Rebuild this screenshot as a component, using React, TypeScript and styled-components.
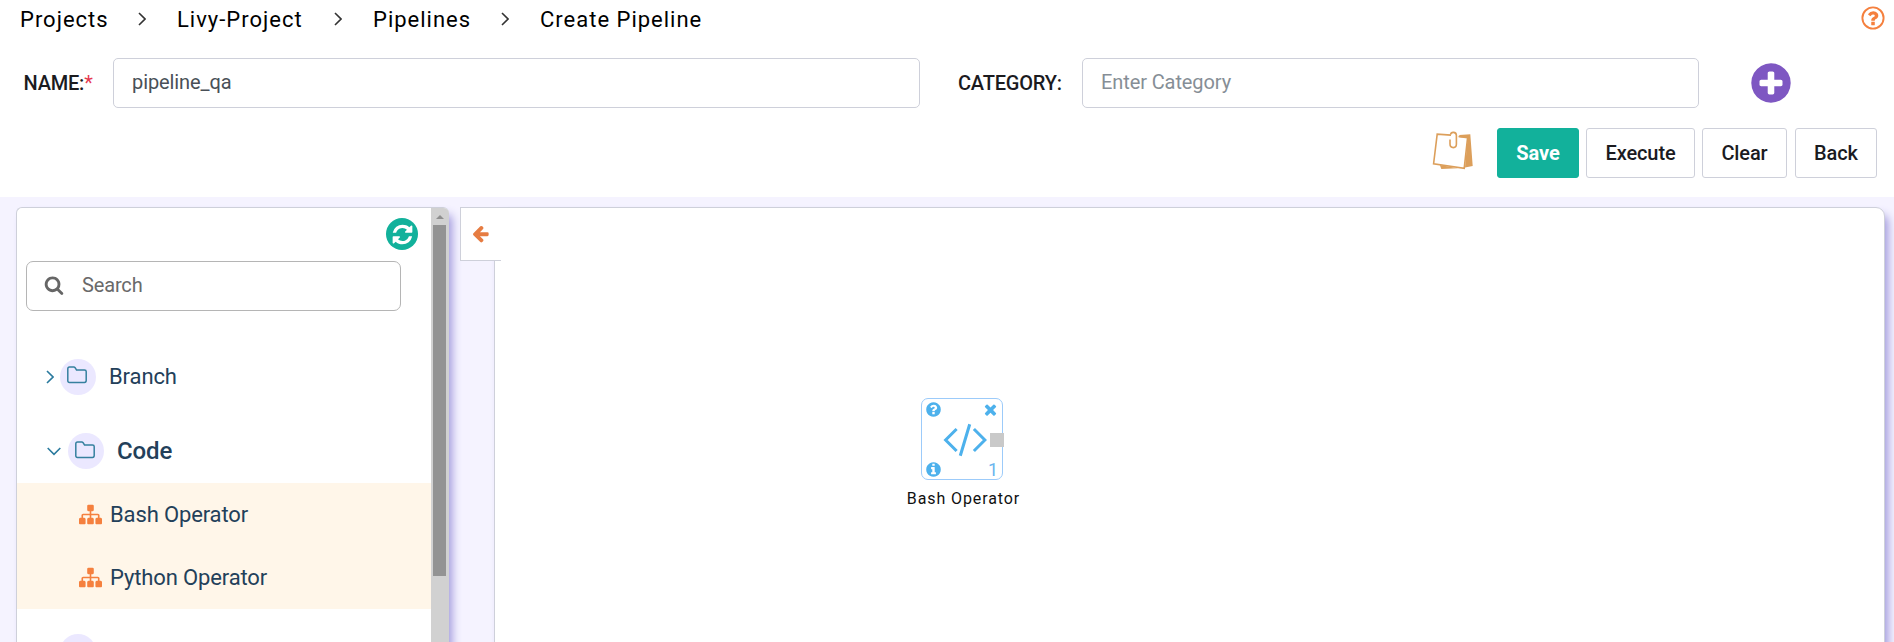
import React from "react";
import styled, { createGlobalStyle } from "styled-components";

const GlobalStyle = createGlobalStyle`
  * { box-sizing: border-box; }
  body {
    margin: 0;
    background: #f5f3ff;
    font-family: Roboto, "Liberation Sans", sans-serif;
    color: #212529;
    overflow: hidden;
  }
  button, input { font-family: inherit; }
`;

const disc =
  "M1664 896q0 209-103 385.5t-279.5 279.5-385.5 103-385.5-103-279.5-279.5-103-385.5 103-385.5 279.5-279.5 385.5-103 385.5 103 279.5 279.5 103 385.5z";
const question =
  "M1024 1376v-192q0-14-9-23t-23-9h-192q-14 0-23 9t-9 23v192q0 14 9 23t23 9h192q14 0 23-9t9-23zM1280 704q0-88-55.5-163t-138.5-116-170-41q-243 0-371 213-15 24 8 42l132 100q7 6 19 6 16 0 25-12 53-68 86-92 34-24 86-24 48 0 85.5 26t37.5 59q0 38-20 61t-68 45q-63 28-115.5 86.5t-52.5 125.5v36q0 14 9 23t23 9h192q14 0 23-9t9-23q0-19 21.5-49.5t54.5-49.5q32-18 49-28.5t46-35 44.5-48 28-60.5 12.5-81z";

const glyphs = {
  search:
    "M1216 832q0-185-131.5-316.5t-316.5-131.5-316.5 131.5-131.5 316.5 131.5 316.5 316.5 131.5 316.5-131.5 131.5-316.5zm512 832q0 52-38 90t-90 38q-54 0-90-38l-343-342q-179 124-399 124-143 0-273.5-55.5t-225-150-150-225-55.5-273.5 55.5-273.5 150-225 225-150 273.5-55.5 273.5 55.5 225 150 150 225 55.5 273.5q0 220-124 399l343 343q37 37 37 90z",
  plus:
    "M1344 960v-128q0-26-19-45t-45-19h-256v-256q0-26-19-45t-45-19h-128q-26 0-45 19t-19 45v256h-256q-26 0-45 19t-19 45v128q0 26 19 45t45 19h256v256q0 26 19 45t45 19h128q26 0 45-19t19-45v-256h256q26 0 45-19t19-45z" +
    disc,
  refresh:
    "M1639 1056q0 5-1 7-64 268-268 434.5t-478 166.5q-146 0-282.5-55t-243.5-157l-129 129q-19 19-45 19t-45-19-19-45v-448q0-26 19-45t45-19h448q26 0 45 19t19 45-19 45l-137 137q71 66 161 102t187 36q134 0 250-65t186-179q11-17 53-117 8-23 30-23h192q13 0 22.5 9.5t9.5 22.5zm25-800v448q0 26-19 45t-45 19h-448q-26 0-45-19t-19-45 19-45l138-138q-148-137-349-137-134 0-250 65t-186 179q-11 17-53 117-8 23-30 23h-199q-13 0-22.5-9.5t-9.5-22.5v-7q65-268 270-434.5t480-166.5q146 0 284 55.5t245 156.5l130-129q19-19 45-19t45 19 19 45z",
  arrowLeft:
    "M1664 896v128q0 53-32.5 90.5t-84.5 37.5h-704l293 294q38 36 38 90t-38 90l-75 76q-37 37-90 37-52 0-91-37l-651-652q-37-37-37-90 0-52 37-91l651-650q38-38 91-38 52 0 90 38l75 74q38 38 38 91t-38 91l-293 293h704q52 0 84.5 37.5t32.5 90.5z",
  sitemap:
    "M1792 1248v320q0 40-28 68t-68 28h-320q-40 0-68-28t-28-68v-320q0-40 28-68t68-28h96v-192h-512v192h96q40 0 68 28t28 68v320q0 40-28 68t-68 28h-320q-40 0-68-28t-28-68v-320q0-40 28-68t68-28h96v-192h-512v192h96q40 0 68 28t28 68v320q0 40-28 68t-68 28h-320q-40 0-68-28t-28-68v-320q0-40 28-68t68-28h96v-192q0-52 38-90t90-38h512v-192h-96q-40 0-68-28t-28-68v-320q0-40 28-68t68-28h320q40 0 68 28t28 68v320q0 40-28 68t-68 28h-96v192h512q52 0 90 38t38 90v192h96q40 0 68 28t28 68z",
  times:
    "M1490 1322q0 40-28 68l-136 136q-28 28-68 28t-68-28l-294-294-294 294q-28 28-68 28t-68-28l-136-136q-28-28-28-68t28-68l294-294-294-294q-28-28-28-68t28-68l136-136q28-28 68-28t68 28l294 294 294-294q28-28 68-28t68 28l136 136q28 28 28 68t-28 68l-294 294 294 294q28 28 28 68z",
  question: question + disc,
  info:
    "M1152 1376v-160q0-14-9-23t-23-9h-96v-512q0-14-9-23t-23-9h-320q-14 0-23 9t-9 23v160q0 14 9 23t23 9h96v320h-96q-14 0-23 9t-9 23v160q0 14 9 23t23 9h448q14 0 23-9t9-23zM1024 480v-160q0-14-9-23t-23-9h-192q-14 0-23 9t-9 23v160q0 14 9 23t23 9h192q14 0 23-9t9-23z" +
    disc,
};

const Svg = styled.svg`
  display: block;
  flex: none;
`;

function Glyph({ name, size, color }: { name: keyof typeof glyphs; size: number; color: string }) {
  return (
    <Svg width={size} height={size} viewBox="0 0 1792 1792" fill={color} fillRule="evenodd">
      <path d={glyphs[name]} />
    </Svg>
  );
}

function HelpIcon() {
  return (
    <Svg width={24} height={24} viewBox="0 0 24 24">
      <circle cx="12" cy="12" r="10.6" fill="none" stroke="#f5803e" strokeWidth="1.9" />
      <g transform="translate(-.3 -.1) scale(.01375)">
        <path d={question} fill="#f5803e" />
      </g>
    </Svg>
  );
}

function NotesIcon() {
  return (
    <Svg width={42} height={42} viewBox="0 0 42 42">
      <path d="M27.300 5 38.300 4.300 40.700 36 33 37.600 35.600 7.900 27.300 7.200z" fill="#dc9f5b" />
      <path d="M7.800 35 9.300 38.900 26 38.300z" fill="#dc9f5b" />
      <path d="M19 5.100 5.200 4.200 1.600 33.700 32.200 38.300 35.600 7.700 26.500 6.500" fill="none" stroke="#dc9f5b" strokeWidth="1.6" />
      <path
        d="M18.500 4.700q.4-2.500 3-2.300 2.900.2 2.900 3v8.600q0 3.600-3 3.600-3.400 0-3.400-3.600V9.600"
        fill="none"
        stroke="#dc9f5b"
        strokeWidth="1.600"
      />
    </Svg>
  );
}

function ChevronRight({ color }: { color: string }) {
  return (
    <Svg width={8} height={14} viewBox="0 0 8 14" fill="none" stroke={color} strokeWidth="1.6">
      <path d="M1 1l6 6-6 6" />
    </Svg>
  );
}

function ChevronDown() {
  return (
    <Svg width={14} height={9} viewBox="0 0 14 9" fill="none" stroke="#2a7a9e" strokeWidth="1.6">
      <path d="M.7 1l6.300 6.300L13.300 1" />
    </Svg>
  );
}

function FolderIcon() {
  return (
    <Svg width={20} height={18} viewBox="0 0 20 18" fill="none" stroke="#35809f" strokeWidth="1.5">
      <path d="M.8 15V2.700Q.8 1 2.500 1H6.800Q7.600 1 8.100 1.700L9.500 3.900H17.500Q19.200 3.900 19.200 5.600V14.600Q19.200 16.400 17.500 16.400H2.500Q.8 16.400.8 14.700z" />
    </Svg>
  );
}

const Header = styled.header`
  height: 197px;
  background: #fff;
`;

const Breadcrumb = styled.nav`
  display: flex;
  align-items: center;
  height: 38px;
  padding: 0 9px 0 20px;
  font-size: 22px;
  letter-spacing: 1px;
  color: #000;
`;

const Crumb = styled.span<{ $width: number }>`
  width: ${(p) => p.$width}px;
  white-space: nowrap;
`;

const Separator = styled.span<{ $gap: number }>`
  margin-right: ${(p) => p.$gap}px;
`;

const HelpLink = styled.a`
  margin: -2px 0 0 auto;
`;

const Form = styled.div`
  display: flex;
  align-items: center;
  height: 50px;
  margin-top: 20px;
  padding-left: 23.5px;
`;

const Label = styled.label<{ $width: number }>`
  width: ${(p) => p.$width}px;
  padding-bottom: 1px;
  font-size: 20px;
  font-weight: 500;
  letter-spacing: -0.2px;
  white-space: nowrap;
  color: #1b1b1f;
`;

const Required = styled.span`
  color: #e63950;
  font-weight: 400;
`;

const Field = styled.input<{ $width: number; $after: number }>`
  width: ${(p) => p.$width}px;
  height: 50px;
  margin-right: ${(p) => p.$after}px;
  padding: 0 18px 2px;
  border: 1px solid #ced0da;
  border-radius: 5px;
  background: #fff;
  font-size: 20px;
  letter-spacing: -0.1px;
  color: #495057;
  outline: none;
  &::placeholder { color: #868e96; opacity: 1; }
`;

const AddButton = styled.span`
  margin-top: -1px;
`;

const Actions = styled.div`
  display: flex;
  height: 50px;
  margin-top: 20px;
  padding-right: 17px;
  justify-content: flex-end;
`;

const NotesButton = styled.span`
  margin: 2px 23px 0 0;
`;

const Button = styled.button<{ $width: number; $primary?: boolean; $gap?: number }>`
  width: ${(p) => p.$width}px;
  margin-left: ${(p) => p.$gap ?? 0}px;
  padding: 0;
  border: 1px solid ${(p) => (p.$primary ? "#12b19b" : "#ced0da")};
  border-radius: 3px;
  background: ${(p) => (p.$primary ? "#12b19b" : "#fff")};
  color: ${(p) => (p.$primary ? "#fff" : "#1b1b1f")};
  font-size: 20px;
  font-weight: ${(p) => (p.$primary ? 700 : 500)};
  letter-spacing: -0.1px;
`;

const Workspace = styled.main`
  display: flex;
  align-items: flex-start;
  height: 445px;
  padding: 10px 0 0 16px;
  overflow: hidden;
`;

const Sidebar = styled.aside`
  display: flex;
  width: 433px;
  height: 460px;
  border: 1px solid #ced0da;
  border-right: 0;
  border-radius: 6px;
  background: #fff;
  box-shadow: 5px 6px 10px -2px #9f97dc;
  overflow: hidden;
`;

const SidebarBody = styled.div`
  flex: 1;
`;

const RefreshRow = styled.div`
  display: flex;
  justify-content: flex-end;
  height: 53px;
  padding: 10px 13px 0 0;
`;

const RefreshButton = styled.span`
  display: flex;
  align-items: center;
  justify-content: center;
  width: 32px;
  height: 32px;
  border-radius: 50%;
  background: #12b19b;
`;

const SearchBox = styled.div`
  display: flex;
  align-items: center;
  gap: 18px;
  width: 375px;
  height: 50px;
  margin-left: 9px;
  padding: 0 0 2px 17px;
  border: 1px solid #b5b5b5;
  border-radius: 7px;
  font-size: 20px;
  letter-spacing: -0.15px;
  color: #696969;
`;

const Folder = styled.div<{ $open?: boolean; $height: number }>`
  display: flex;
  align-items: center;
  height: ${(p) => p.$height}px;
  padding-left: ${(p) => (p.$open ? 30 : 29)}px;
  padding-top: ${(p) => (p.$open ? 11 : 0)}px;
  font-size: ${(p) => (p.$open ? 24 : 22)}px;
  letter-spacing: -0.1px;
  font-weight: ${(p) => (p.$open ? 500 : 400)};
  color: #23405a;
`;

const FolderBadge = styled.span<{ $gap: number }>`
  display: flex;
  align-items: center;
  justify-content: center;
  width: 36px;
  height: 36px;
  margin: 0 13px 0 ${(p) => p.$gap}px;
  padding: 0 2px 3px 0;
  border-radius: 50%;
  background: #ebe8ff;
`;

const Tree = styled.div`
  padding-top: 34px;
`;

const Operators = styled.div`
  background: #fff6e9;
`;

const Operator = styled.div`
  display: flex;
  align-items: center;
  gap: 8px;
  height: 63px;
  padding-left: 62px;
  font-size: 22px;
  letter-spacing: -0.13px;
  color: #23405a;
`;

const ScrollTrack = styled.div`
  width: 18px;
  padding: 7px 3px 0 2px;
  background: #d1d1d1;
`;

const ScrollArrow = styled.div`
  width: 8px;
  margin: 0 0 6px 3px;
  border: 4px solid transparent;
  border-top: 0;
  border-bottom-color: #8f8f8f;
`;

const ScrollThumb = styled.div`
  height: 351px;
  background: #939393;
`;

const CollapseTab = styled.div`
  display: flex;
  align-items: center;
  z-index: 1;
  width: 41px;
  height: 54px;
  margin: 0 -7px 0 11px;
  padding: 0 0 2px 10px;
  border: 1px solid #ced0da;
  border-right: 0;
  background: #fff;
`;

const Canvas = styled.section`
  position: relative;
  width: 1391px;
  height: 460px;
  border: 1px solid #ced0da;
  border-radius: 0 9px 9px 0;
  background: #fff;
  box-shadow: 5px 6px 10px -2px #9f97dc;
`;

const Node = styled.div`
  position: absolute;
  left: 405px;
  top: 190px;
  width: 124px;
  display: flex;
  flex-direction: column;
  align-items: center;
`;

const NodeBox = styled.div`
  position: relative;
  display: flex;
  flex-direction: column;
  justify-content: space-between;
  width: 82px;
  height: 82px;
  padding: 2px 3px 1px 3px;
  border: 1px solid #9ccbfa;
  border-radius: 7px;
`;

const NodeRow = styled.div`
  display: flex;
  align-items: center;
  justify-content: space-between;
  height: 17px;
`;

const NodeIndex = styled.span`
  margin-right: 1px;
  font-size: 18px;
  line-height: 17px;
  color: #6bb5ee;
`;

const Symbol = styled.div`
  display: flex;
  justify-content: center;
  padding: 1px 0 0 6px;
`;

const Port = styled.span`
  position: absolute;
  right: -2px;
  top: 34px;
  width: 14px;
  height: 14px;
  background: #c9c9c9;
`;

const NodeLabel = styled.span`
  margin: 9px 0 0 3px;
  font-size: 16px;
  line-height: 20px;
  letter-spacing: 0.9px;
  white-space: nowrap;
  color: #111;
`;

const BLUE = "#4db1ec";

export default function App() {
  return (
    <>
      <GlobalStyle />
      <Header>
        <Breadcrumb>
          <Crumb $width={118}>Projects</Crumb>
          <Separator $gap={31}><ChevronRight color="#333" /></Separator>
          <Crumb $width={157}>Livy-Project</Crumb>
          <Separator $gap={31}><ChevronRight color="#333" /></Separator>
          <Crumb $width={128}>Pipelines</Crumb>
          <Separator $gap={31}><ChevronRight color="#333" /></Separator>
          <Crumb $width={180}>Create Pipeline</Crumb>
          <HelpLink><HelpIcon /></HelpLink>
        </Breadcrumb>
        <Form>
          <Label $width={89.5}>NAME:<Required>*</Required></Label>
          <Field $width={807} $after={38} defaultValue="pipeline_qa" />
          <Label $width={124}>CATEGORY:</Label>
          <Field $width={617} $after={49} placeholder="Enter Category" />
          <AddButton><Glyph name="plus" size={46} color="#7e57c2" /></AddButton>
        </Form>
        <Actions>
          <NotesButton><NotesIcon /></NotesButton>
          <Button $width={82} $primary>Save</Button>
          <Button $width={109} $gap={7}>Execute</Button>
          <Button $width={85} $gap={7}>Clear</Button>
          <Button $width={82} $gap={8}>Back</Button>
        </Actions>
      </Header>
      <Workspace>
        <Sidebar>
          <SidebarBody>
            <RefreshRow>
              <RefreshButton><Glyph name="refresh" size={23} color="#fff" /></RefreshButton>
            </RefreshRow>
            <SearchBox>
              <Glyph name="search" size={20} color="#666" />
              Search
            </SearchBox>
            <Tree>
              <Folder $height={63}>
                <ChevronRight color="#2a7a9e" />
                <FolderBadge $gap={6}><FolderIcon /></FolderBadge>
                Branch
              </Folder>
              <Folder $height={75} $open>
                <ChevronDown />
                <FolderBadge $gap={7}><FolderIcon /></FolderBadge>
                Code
              </Folder>
              <Operators>
                <Operator><Glyph name="sitemap" size={23} color="#f5803e" />Bash Operator</Operator>
                <Operator><Glyph name="sitemap" size={23} color="#f5803e" />Python Operator</Operator>
              </Operators>
              <Folder $height={86}>
                <ChevronRight color="#2a7a9e" />
                <FolderBadge $gap={6}><FolderIcon /></FolderBadge>
              </Folder>
            </Tree>
          </SidebarBody>
          <ScrollTrack>
            <ScrollArrow />
            <ScrollThumb />
          </ScrollTrack>
        </Sidebar>
        <CollapseTab><Glyph name="arrowLeft" size={19} color="#e67c42" /></CollapseTab>
        <Canvas>
          <Node>
            <NodeBox>
              <NodeRow>
                <Glyph name="question" size={17} color={BLUE} />
                <Glyph name="times" size={17} color={BLUE} />
              </NodeRow>
              <Symbol>
                <Svg width={44} height={34} viewBox="0 0 42 32" fill="none" stroke={BLUE} strokeWidth="2.900">
                  <path d="M13 5.500 2.500 16 13 26.500M29.500 5.500 40 16 29.500 26.500M25.500 1 16.500 31" />
                </Svg>
              </Symbol>
              <NodeRow>
                <Glyph name="info" size={17} color={BLUE} />
                <NodeIndex>1</NodeIndex>
              </NodeRow>
              <Port />
            </NodeBox>
            <NodeLabel>Bash Operator</NodeLabel>
          </Node>
        </Canvas>
      </Workspace>
    </>
  );
}
